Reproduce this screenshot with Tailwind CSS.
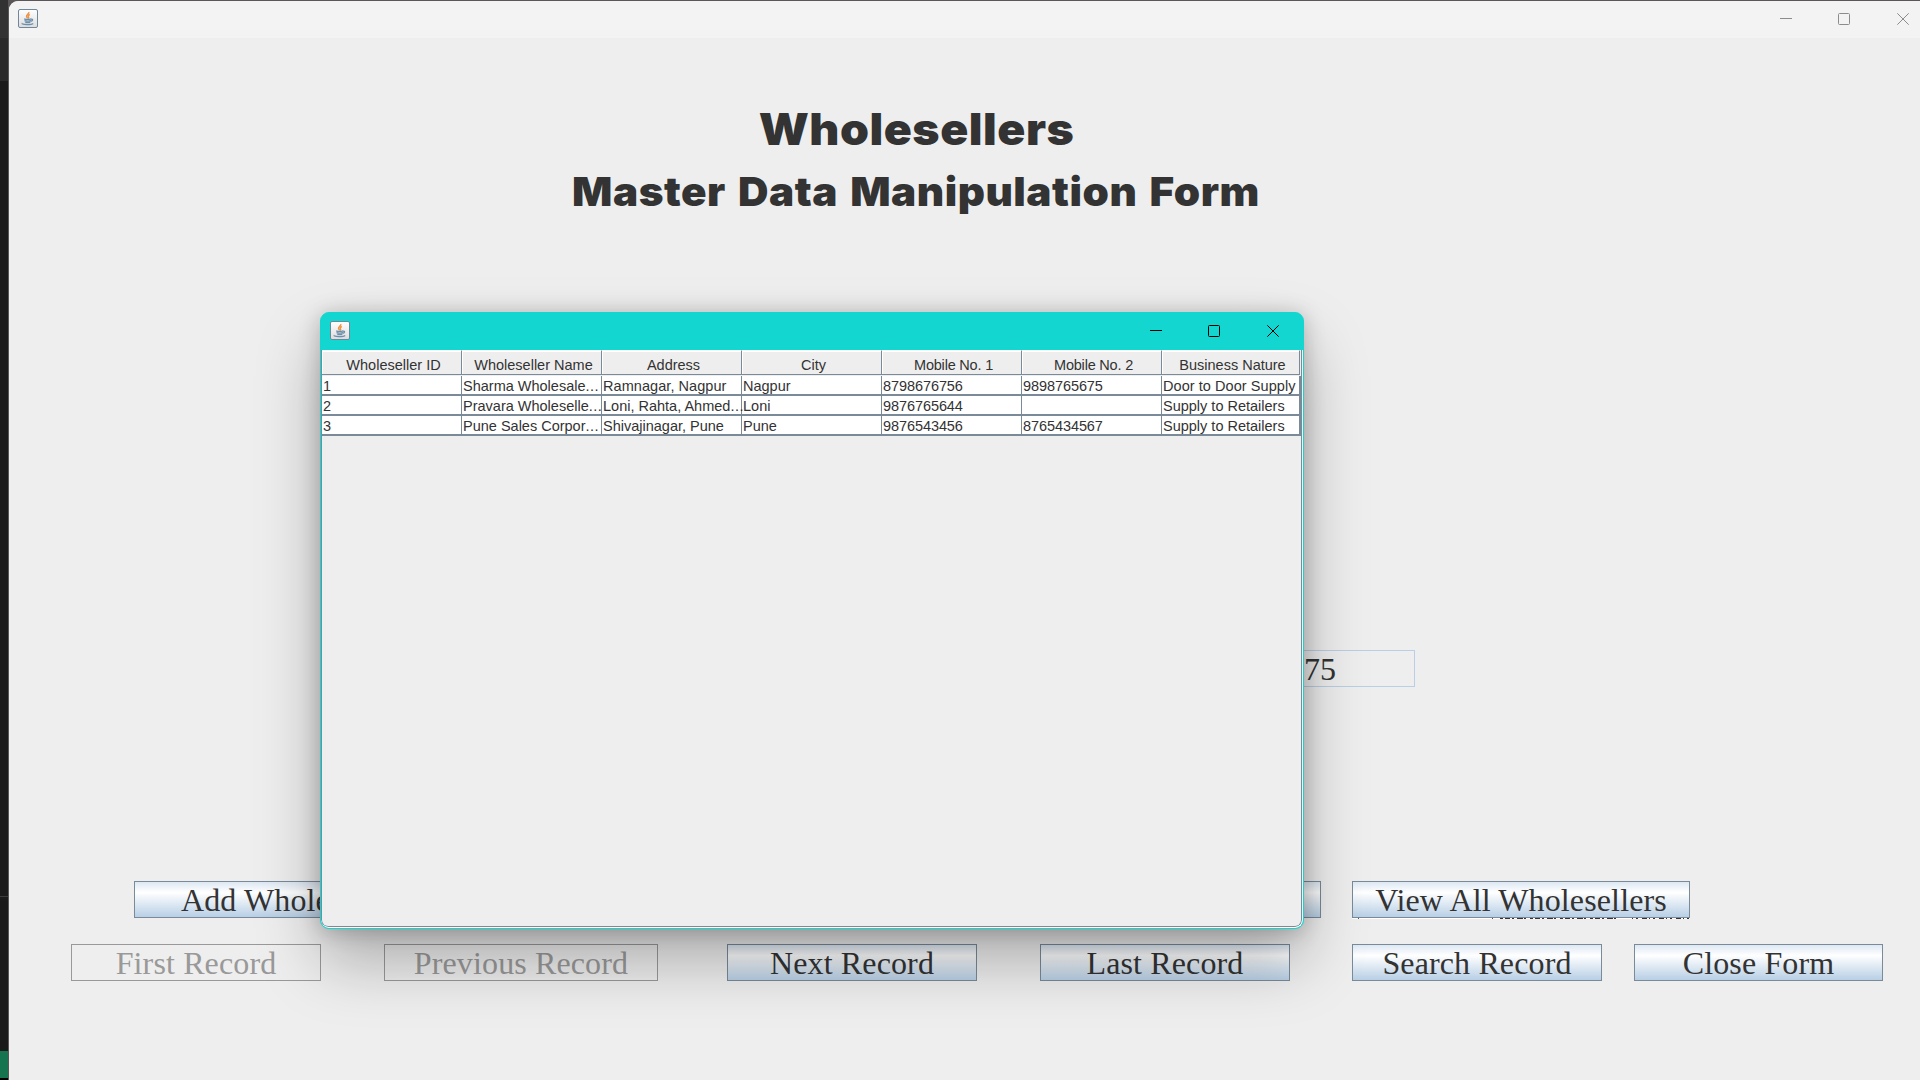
<!DOCTYPE html>
<html lang="en">
<head>
<meta charset="utf-8">
<title>Wholesellers</title>
<script src="https://cdn.jsdelivr.net/npm/@tailwindcss/browser@4"></script>
</head>
<body class="relative flex h-[1080px] w-[1920px] overflow-hidden bg-[#5a565a] text-[#333333]">
<svg class="absolute h-0 w-0">
  <defs><linearGradient id="jg" x1="0" y1="0" x2="0" y2="1"><stop offset="0" stop-color="#fff"/><stop offset="1" stop-color="#dcdcdc"/></linearGradient></defs>
  <symbol id="java" viewBox="0 0 20 19">
    <rect x=".5" y=".5" width="19" height="18" rx="1.500" fill="url(#jg)" stroke="#6f8799"/>
    <path d="M10.800 3c.8 1.600-2.600 2.700-2.300 4.300.1.900 1 1.400 1 2.300M11.800 5.500c-1.600.7-2 1.400-1.400 2.200.5.700.2 1.400-.4 1.900" fill="none" stroke="#ee9345" stroke-width="1.400"/>
    <path d="M6.200 9.800c1.500.6 5 .6 7 0M6.500 11.600c2 .6 4.500.6 6.500 0M7.300 13.300c1.500.5 3.500.5 5 0M13 10.300c2.200-.6 2.200 1.500-.3 2M4.300 14.200c-1.300 1.800 9 1.900 10.900.2" fill="none" stroke="#6b8fad" stroke-width="1.300"/>
  </symbol>
</svg>

<!-- strip of the editor behind the form -->
<div class="flex w-2 shrink-0 flex-col bg-[#1a1a1a]">
  <div class="h-[38px] bg-[#323232]"></div>
  <div class="h-[43px] bg-[#2a2a2a]"></div>
  <div class="h-[815px]"></div>
  <div class="h-px bg-[#3c3c3c]"></div>
  <div class="h-[154px]"></div>
  <div class="h-[27px] bg-[#16744f]"></div>
  <div class="h-[2px] bg-black"></div>
</div>

<!-- main form -->
<main class="mt-px ml-px flex flex-1 flex-col overflow-hidden rounded-tl-[9px] bg-[#eeeeee]">
  <header class="flex h-[37px] shrink-0 items-start justify-between bg-[#f3f3f3] pl-[9px] pr-[11px]">
    <svg class="mt-2 h-[19px] w-5"><use href="#java"/></svg>
    <div class="mt-3 flex gap-[46px] text-[#8c8c8c]">
      <svg class="h-3 w-3" viewBox="0 0 12 12"><path d="M0 5.500h12" stroke="currentColor"/></svg>
      <svg class="h-3 w-3" viewBox="0 0 12 12"><rect x=".5" y=".5" width="11" height="11" rx="1" fill="none" stroke="currentColor"/></svg>
      <svg class="ml-px h-3 w-3" viewBox="0 0 12 12"><path d="M.3.3l11.400 11.400M11.700.3L.3 11.700" stroke="currentColor"/></svg>
    </div>
  </header>
  <div class="flex w-[1814px] flex-col items-center pt-[60px] font-['Inter',sans-serif] font-black">
    <h1 class="h-[63px] scale-x-[1.042] text-[44.500px] leading-[62px] tracking-[0.500px] whitespace-nowrap">Wholesellers</h1>
    <h2 class="h-[62px] scale-x-[1.055] text-[40px] leading-[62px] tracking-[0.500px] whitespace-nowrap [word-spacing:3px]">Master Data Manipulation Form</h2>
  </div>
  <div class="mt-[427px] ml-[1056px] flex h-[37px] w-[350px] items-center border border-[#b8cfe5] pl-[225px] font-['Liberation_Serif',serif] text-[32px]"><span class="ml-[13px]">75</span></div>

  <div class="text-center font-['Liberation_Serif',serif] text-[32px] tracking-[0.130px]">
    <div class="mt-[194px] flex">
      <button class="ml-[125px] h-[37px] w-[313px] border border-[#7a8a99] bg-linear-to-b from-[#dde8f3] via-white via-30% to-[#b8cfe5] leading-[37px]">Add Wholeseller</button>
      <button class="ml-[536px] h-[37px] w-[338px] border border-[#7a8a99] bg-linear-to-b from-[#dde8f3] via-white via-30% to-[#b8cfe5] leading-[37px]"></button>
      <div class="relative ml-[31px]">
        <button class="block h-[37px] w-[338px] border border-[#7a8a99] bg-linear-to-b from-[#dde8f3] via-white via-30% to-[#b8cfe5] leading-[37px]">View All Wholesellers</button>
        <svg class="absolute top-[37px] left-0 h-px w-[338px] bg-white"><path d="M6 .5h1M140 .5h1" stroke="#555"/><path d="M148 .5h119" stroke="#333" stroke-dasharray="3 2 5 2 2 3 6 1 2 4"/><path d="M280 .5h57" stroke="#333" stroke-dasharray="1 3 2 4 5 2"/></svg>
      </div>
    </div>
    <div class="mt-[26px] flex">
      <button class="ml-[62px] h-[37px] w-[250px] border border-[#999999] leading-[37px] text-[#999999]">First Record</button>
      <button class="ml-[63px] h-[37px] w-[274px] border border-[#999999] leading-[37px] text-[#999999]">Previous Record</button>
      <button class="ml-[69px] h-[37px] w-[250px] border border-[#7a8a99] bg-linear-to-b from-[#dde8f3] via-white via-30% to-[#b8cfe5] leading-[37px]">Next Record</button>
      <button class="ml-[63px] h-[37px] w-[250px] border border-[#7a8a99] bg-linear-to-b from-[#dde8f3] via-white via-30% to-[#b8cfe5] leading-[37px]">Last Record</button>
      <button class="ml-[62px] h-[37px] w-[250px] border border-[#7a8a99] bg-linear-to-b from-[#dde8f3] via-white via-30% to-[#b8cfe5] leading-[37px]">Search Record</button>
      <button class="ml-[32px] h-[37px] w-[249px] border border-[#7a8a99] bg-linear-to-b from-[#dde8f3] via-white via-30% to-[#b8cfe5] leading-[37px]">Close Form</button>
    </div>
  </div>
</main>

<!-- table window -->
<section class="absolute top-[312px] left-[320px] flex h-[617px] w-[984px] flex-col overflow-hidden rounded-[9px] border border-[#14d6d0] bg-[#14d6d0] shadow-[0_32px_64px_rgba(0,0,0,0.28),0_2px_21px_rgba(0,0,0,0.22)]">
  <header class="flex h-[37px] shrink-0 items-start justify-between pl-[9px] pr-6">
    <svg class="mt-2 h-[19px] w-5"><use href="#java"/></svg>
    <div class="mt-3 flex gap-[46px] text-black">
      <svg class="h-3 w-3" viewBox="0 0 12 12"><path d="M0 5.500h12" stroke="currentColor"/></svg>
      <svg class="h-3 w-3" viewBox="0 0 12 12"><rect x=".5" y=".5" width="11" height="11" rx="1" fill="none" stroke="currentColor"/></svg>
      <svg class="ml-px h-3 w-3" viewBox="0 0 12 12"><path d="M.3.3l11.400 11.400M11.700.3L.3 11.700" stroke="currentColor"/></svg>
    </div>
  </header>
  <div class="flex flex-1 overflow-hidden rounded-b-lg border-r border-b border-white bg-white">
    <div class="flex flex-1 flex-col rounded-b-[7px] border-r border-b border-l border-[#7a8a99] bg-[#eeeeee] font-['Liberation_Sans',sans-serif] text-[14.500px]">
      <div id="head" class="grid h-[26px] shrink-0 grid-cols-[140px_140px_140px_140px_140px_140px_138px] bg-[#eeeeee] text-center"></div>
      <div id="rows" class="w-[979px] border-r border-[#7a8a99]"></div>
    </div>
  </div>
</section>
<script>
  const heads = ["Wholeseller ID", "Wholeseller Name", "Address", "City", "Mobile No. 1", "Mobile No. 2", "Business Nature"];
  const rows = [
    ["1", "Sharma Wholesale...", "Ramnagar, Nagpur", "Nagpur", "8798676756", "9898765675", "Door to Door Supply"],
    ["2", "Pravara Wholeselle...", "Loni, Rahta, Ahmed...", "Loni", "9876765644", "", "Supply to Retailers"],
    ["3", "Pune Sales Corpor...", "Shivajinagar, Pune", "Pune", "9876543456", "8765434567", "Supply to Retailers"]
  ];
  const track = t => /^\d/.test(t) ? "tracking-[-0.080px]" : /Door|Ramnagar/.test(t) ? "tracking-[0.060px]" : "";
  document.getElementById("head").innerHTML = heads.map(h =>
    `<div class="mb-px h-[25px] border-t border-r border-b border-t-white border-r-[#7a8a99] border-b-[#7a8a99]"><div class="h-full border-t border-l border-white pl-[3px] leading-[27px] whitespace-nowrap ${h.startsWith("Mobile") ? "tracking-[-0.200px]" : ""}">${h}</div></div>`).join("");
  document.getElementById("rows").innerHTML = rows.map(r =>
    `<div class="grid h-5 grid-cols-[140px_140px_140px_140px_140px_140px_138px] border-b-2 border-[#7a8a99] bg-white">${r.map(c =>
      `<div class="border-r border-[#7a8a99] pl-px leading-[20px] whitespace-nowrap ${track(c)}">${c.replace("...", '<span class="tracking-[0.500px]">...</span>')}</div>`).join("")}</div>`).join("");
</script>
</body>
</html>
